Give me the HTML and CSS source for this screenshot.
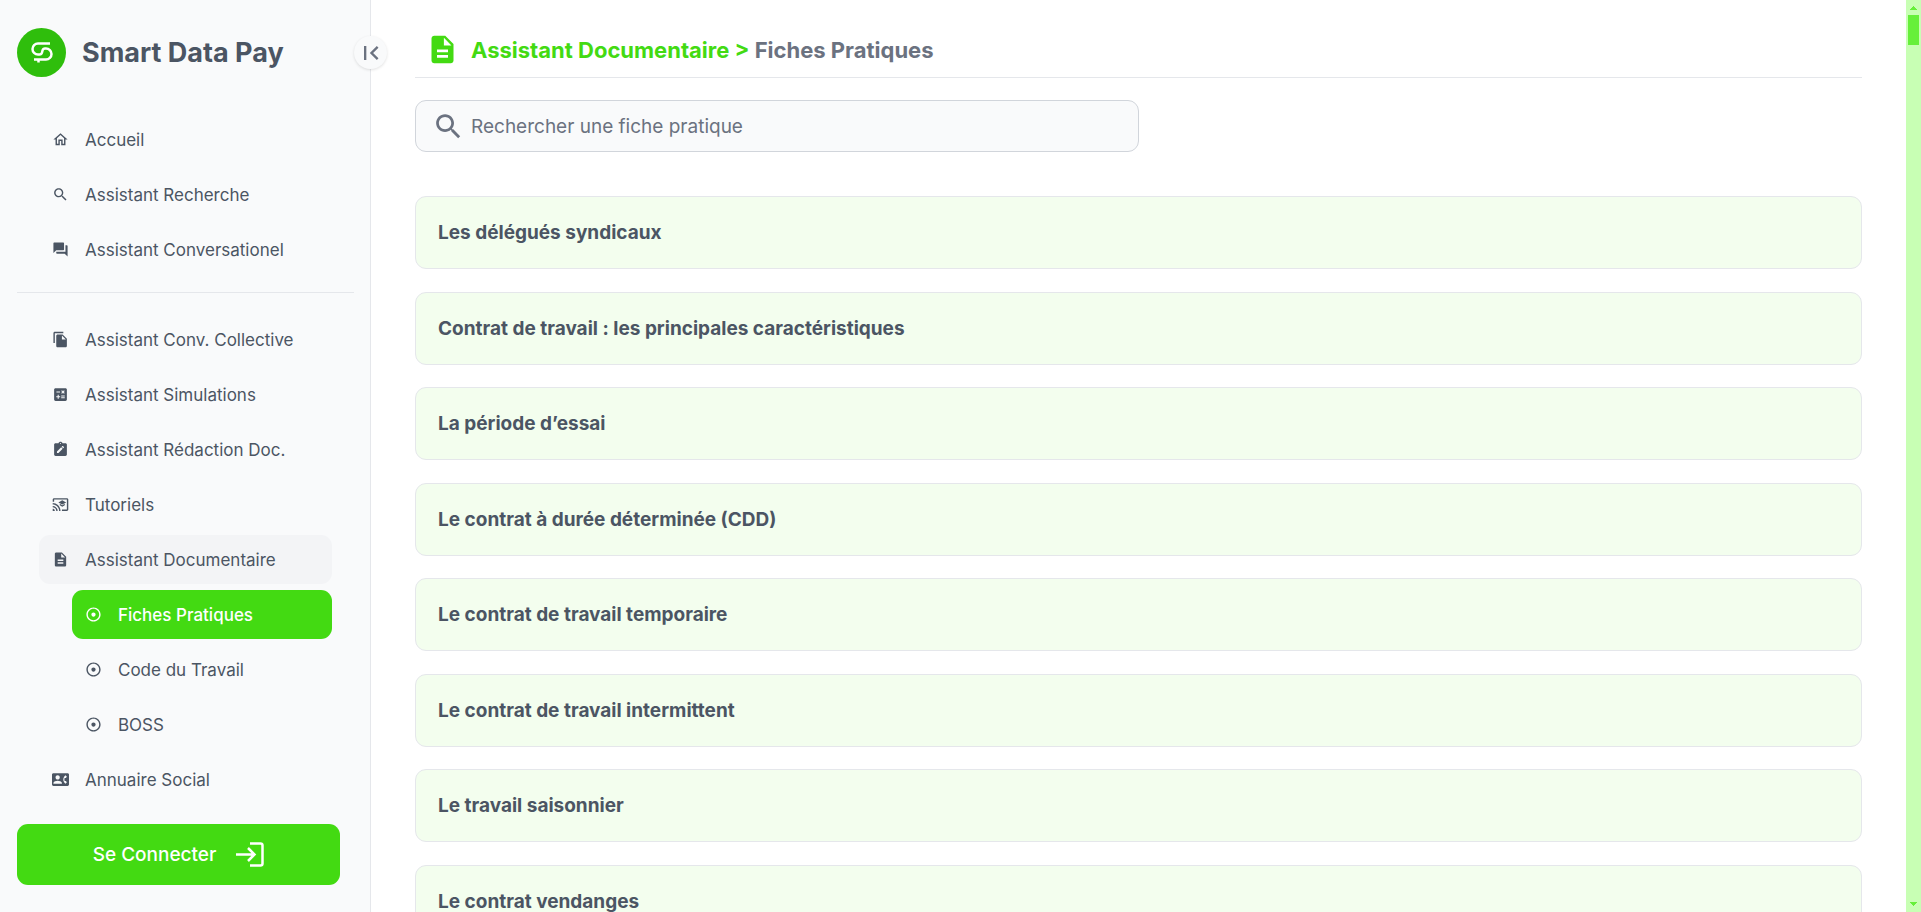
FILE: index.html
```html
<!DOCTYPE html>
<html lang="fr">
<head>
<meta charset="utf-8">
<meta name="viewport" content="width=device-width, initial-scale=1">
<title>Smart Data Pay – Fiches Pratiques</title>
<link rel="stylesheet" href="styles.css">
</head>
<body>
<svg class="sprite" aria-hidden="true">
  <symbol id="i-doc" viewBox="0 0 24 24"><path d="M14 2H6c-1.1 0-1.99.9-1.99 2L4 20c0 1.1.89 2 1.99 2H18c1.1 0 2-.9 2-2V8l-6-6zm2 16H8v-2h8v2zm0-4H8v-2h8v2zm-3-5V3.500L18.500 9H13z"/></symbol>
  <symbol id="i-search" viewBox="0 0 24 24"><path d="M15.500 14h-.79l-.28-.27C15.410 12.590 16 11.110 16 9.500 16 5.910 13.090 3 9.500 3S3 5.910 3 9.500 5.910 16 9.500 16c1.610 0 3.090-.59 4.230-1.570l.27.28v.79l5 4.990L20.490 19l-4.990-5zm-6 0C7.010 14 5 11.990 5 9.500S7.010 5 9.500 5 14 7.010 14 9.500 11.990 14 9.500 14z"/></symbol>
  <symbol id="i-dot" viewBox="0 0 24 24"><path d="M12 2C6.490 2 2 6.490 2 12s4.490 10 10 10 10-4.490 10-10S17.510 2 12 2zm0 18c-4.410 0-8-3.590-8-8s3.590-8 8-8 8 3.590 8 8-3.590 8-8 8zm3-8c0 1.660-1.340 3-3 3s-3-1.340-3-3 1.340-3 3-3 3 1.340 3 3z"/></symbol>
</svg>
<div class="app">
  <aside class="sidebar">
    <button class="toggle" type="button" aria-label="Réduire le menu"><svg viewBox="0 0 24 24"><path d="M18.410 16.590L13.820 12l4.590-4.590L17 6l-6 6 6 6zM6 6h2v12H6z"/></svg></button>
    <a class="brand" href="#">
      <svg class="logo" viewBox="0 0 49 49"><circle cx="24.500" cy="24.500" r="24.500" fill="#2fbe0c"/><path d="M33 15.500H21a5.500 5.500 0 0 0 0 11h1.500q2 0 2.500-2l.5-2q.5-2 2.500-2h1a5.500 5.500 0 0 1 0 11H17M21.500 31v3.500" fill="none" stroke="#fff" stroke-width="2.500"/></svg>
      <span>Smart Data Pay</span>
    </a>
    <nav class="nav">
      <ul class="menu">
        <li><a href="#"><svg viewBox="0 0 24 24"><path d="M12 5.690l5 4.500V18h-2v-6H9v6H7v-7.810l5-4.500M12 3L2 12h3v8h6v-6h2v6h6v-8h3L12 3z"/></svg>Accueil</a></li>
        <li><a href="#"><svg><use href="#i-search"/></svg>Assistant Recherche</a></li>
        <li><a href="#"><svg viewBox="0 0 24 24"><path d="M21 6h-2v9H6v2c0 .55.45 1 1 1h11l4 4V7c0-.55-.45-1-1-1zm-4 6V3c0-.55-.45-1-1-1H3c-.55 0-1 .45-1 1v14l4-4h10c.55 0 1-.45 1-1z"/></svg>Assistant Conversationel</a></li>
      </ul>
      <hr>
      <ul class="menu">
        <li><a href="#"><svg viewBox="0 0 24 24"><path d="M16 1H4c-1.100 0-2 .9-2 2v14h2V3h12V1zm-1 4l6 6v10c0 1.100-.9 2-2 2H7.990C6.890 23 6 22.100 6 21l.01-14c0-1.100.89-2 1.990-2h7zm-1 7h5.500L14 6.500V12z"/></svg>Assistant Conv. Collective</a></li>
        <li><a href="#"><svg viewBox="0 0 24 24"><path d="M19 3H5c-1.100 0-2 .9-2 2v14c0 1.100.9 2 2 2h14c1.100 0 2-.9 2-2V5c0-1.100-.9-2-2-2zm-5.970 4.060L14.090 6l1.410 1.410L16.910 6l1.060 1.060-1.410 1.410 1.410 1.410-1.060 1.060-1.410-1.400-1.410 1.410-1.060-1.060 1.410-1.410-1.410-1.420zm-6.780.66h5v1.500h-5v-1.500zM11.500 16h-2v2H8v-2H6v-1.500h2v-2h1.500v2h2V16zm6.500 1.250h-5v-1.500h5v1.500zm0-2.500h-5v-1.500h5v1.500z"/></svg>Assistant Simulations</a></li>
        <li><a href="#"><svg viewBox="0 0 24 24"><path d="M19 3h-4.180C14.400 1.840 13.300 1 12 1s-2.400.84-2.820 2H5c-1.100 0-2 .9-2 2v14c0 1.100.9 2 2 2h14c1.100 0 2-.9 2-2V5c0-1.100-.9-2-2-2zm-7-.25c.41 0 .75.34.75.75s-.34.75-.75.75-.75-.34-.75-.75.34-.75.75-.75zM9.100 17H7v-2.140l5.960-5.960 2.120 2.120L9.100 17zm7.750-7.730l-1.060 1.060-2.120-2.120 1.060-1.060c.2-.2.51-.2.71 0l1.410 1.410c.2.2.2.51 0 .71z"/></svg>Assistant Rédaction Doc.</a></li>
        <li><a href="#"><svg viewBox="0 0 24 24"><path d="M21 3H3c-1.100 0-2 .9-2 2v3h2V5h18v14h-7v2h7c1.100 0 2-.9 2-2V5c0-1.100-.9-2-2-2zM1 18v3h3c0-1.660-1.340-3-3-3zm0-4v2c2.760 0 5 2.240 5 5h2c0-3.870-3.130-7-7-7zm0-4v2c4.970 0 9 4.030 9 9h2c0-6.080-4.930-11-11-11zm10 1.090v2L14.500 15l3.500-1.910v-2L14.500 13 11 11.090zM14.500 6L9 9l5.500 3L20 9l-5.500-3z"/></svg>Tutoriels</a></li>
        <li><a class="open" href="#"><svg><use href="#i-doc"/></svg>Assistant Documentaire</a>
          <ul class="menu sub">
            <li><a class="active" href="#" aria-current="page"><svg><use href="#i-dot"/></svg>Fiches Pratiques</a></li>
            <li><a href="#"><svg><use href="#i-dot"/></svg>Code du Travail</a></li>
            <li><a href="#"><svg><use href="#i-dot"/></svg>BOSS</a></li>
          </ul>
        </li>
        <li><a href="#"><svg viewBox="0 0 24 24"><path d="M22 3H2C.9 3 0 3.900 0 5v14c0 1.100.9 2 2 2h20c1.100 0 1.990-.9 1.990-2L24 5c0-1.100-.9-2-2-2zM8 6c1.660 0 3 1.340 3 3s-1.340 3-3 3-3-1.340-3-3 1.340-3 3-3zm6 12H2v-1c0-2 4-3.100 6-3.100s6 1.100 6 3.100v1zm3.850-4h1.640L21 16l-1.990 1.990c-1.310-.98-2.280-2.380-2.730-3.990-.18-.64-.28-1.310-.28-2s.1-1.360.28-2c.45-1.620 1.420-3.010 2.730-3.990L21 8l-1.510 2h-1.640c-.22.63-.35 1.300-.35 2s.13 1.370.35 2z"/></svg>Annuaire Social</a></li>
      </ul>
    </nav>
    <button class="login" type="button">Se Connecter <svg viewBox="0 0 28 25"><path d="M14 1.500h10.500a2 2 0 0 1 2 2v18a2 2 0 0 1-2 2H14M0 12.500h18M12 6l6.500 6.500L12 19" fill="none" stroke="#fff" stroke-width="2.500"/></svg></button>
  </aside>
  <main class="main">
    <h1 class="title"><svg><use href="#i-doc"/></svg><span><a href="#">Assistant Documentaire &gt;</a> Fiches Pratiques</span></h1>
    <label class="search">
      <svg aria-hidden="true"><use href="#i-search"/></svg>
      <input type="search" placeholder="Rechercher une fiche pratique" aria-label="Rechercher une fiche pratique">
    </label>
    <ul class="cards">
      <li><a href="#">Les délégués syndicaux</a></li>
      <li><a href="#">Contrat de travail : les principales caractéristiques</a></li>
      <li><a href="#">La période d’essai</a></li>
      <li><a href="#">Le contrat à durée déterminée (CDD)</a></li>
      <li><a href="#">Le contrat de travail temporaire</a></li>
      <li><a href="#">Le contrat de travail intermittent</a></li>
      <li><a href="#">Le travail saisonnier</a></li>
      <li><a href="#">Le contrat vendanges</a></li>
    </ul>
  </main>
  <div class="scrollbar" aria-hidden="true">
    <svg viewBox="0 0 7 4"><path d="M3 0h1v1h1v1h1v1h1v1H0V3h1V2h1V1h1z"/></svg>
    <div class="thumb"></div>
    <svg viewBox="0 0 7 4"><path d="M0 0h7v1H6v1H5v1H4v1H3V3H2V2H1V1H0z"/></svg>
  </div>
</div>
</body>
</html>
```
FILE: styles.css
```css
* { box-sizing: border-box; }
html { font-size: 18px; }
body {
  margin: 0;
  font-family: Inter, "Liberation Sans", sans-serif;
  color: #4b5563;
  background: #fff;
}
ul { list-style: none; margin: 0; padding: 0; }
a { color: inherit; text-decoration: none; }
button, input { font: inherit; }
svg { flex: none; fill: currentColor; }
.sprite { display: none; }

.app { display: flex; height: 100vh; overflow: hidden; }

.sidebar {
  position: relative;
  flex: none;
  width: 371px;
  display: flex;
  flex-direction: column;
  padding: 28px 16px 27px 17px;
  background: #f9fafb;
  border-right: 1px solid #e5e7eb;
}
.toggle {
  position: absolute;
  top: 36px;
  right: -17px;
  width: 33px;
  height: 33px;
  display: grid;
  place-items: center;
  padding: 0;
  border: 0;
  border-radius: 50%;
  background: #f9fafb;
  color: #6b7280;
  box-shadow: 0 1px 3px rgba(0, 0, 0, .12);
}
.toggle svg { width: 28px; height: 28px; }
.brand {
  display: flex;
  align-items: center;
  gap: 16px;
  font-size: 27px;
  font-weight: 700;
}
.logo { width: 49px; height: 49px; }
.nav { flex: 1; padding-top: 38px; }
.nav hr {
  margin: 18px 0 22px;
  border: 0;
  border-top: 1px solid #e5e7eb;
}
.menu { display: flex; flex-direction: column; gap: 6px; }
.nav > .menu { padding: 0 22px; }
.menu a {
  display: flex;
  align-items: center;
  gap: 16px;
  height: 49px;
  padding: 0 13px;
  border-radius: 11px;
  font-size: 17px;
}
.menu a svg { width: 17px; height: 17px; }
.menu .open { background: #f3f4f6; }
.sub { margin: 6px 0 0 33px; }
.menu .active { background: #43da12; color: #fff; font-weight: 500; }
.login {
  display: flex;
  align-items: center;
  justify-content: center;
  gap: 20px;
  height: 61px;
  margin-right: 14px;
  border: 0;
  border-radius: 11px;
  background: #43da12;
  color: #fff;
  font-size: 19px;
  font-weight: 500;
}
.login svg { width: 28px; height: 25px; }

.main { flex: 1; min-width: 0; padding: 22px 44px; }
.title {
  display: flex;
  align-items: center;
  gap: 12px;
  height: 56px;
  margin: 0 0 22px;
  padding: 0 11px;
  border-bottom: 1px solid #e5e7eb;
  font-size: 22px;
  font-weight: 700;
  color: #6b7280;
}
.title svg { width: 33px; height: 33px; }
.title a, .title svg { color: #43da12; }
.search {
  display: flex;
  align-items: center;
  gap: 6px;
  width: 50%;
  height: 52px;
  margin-bottom: 44px;
  padding: 0 16px;
  border: 1px solid #d1d5db;
  border-radius: 11px;
  background: #f9fafb;
  color: #6b7280;
}
.search svg { width: 33px; height: 33px; }
.search input {
  flex: 1;
  min-width: 0;
  padding: 0;
  border: 0;
  outline: 0;
  background: none;
  color: inherit;
  font-size: 19px;
}
.search input::placeholder { color: #6b7280; opacity: 1; }
.cards { display: flex; flex-direction: column; gap: 1.25rem; }
.cards a {
  display: block;
  padding: 22px;
  border: 1px solid #e5e7eb;
  border-radius: 11px;
  background: #f3feee;
  font-size: 19px;
  line-height: 27px;
  font-weight: 700;
}

.scrollbar {
  flex: none;
  width: 15px;
  display: flex;
  flex-direction: column;
  align-items: center;
  padding: 6px 2px;
  background: #c8ffb4;
  color: #66f03a;
}
.scrollbar svg { width: 7px; height: 4px; }
.thumb { width: 11px; height: 30px; margin: 5px 0 auto; background: #66f03a; }
```
